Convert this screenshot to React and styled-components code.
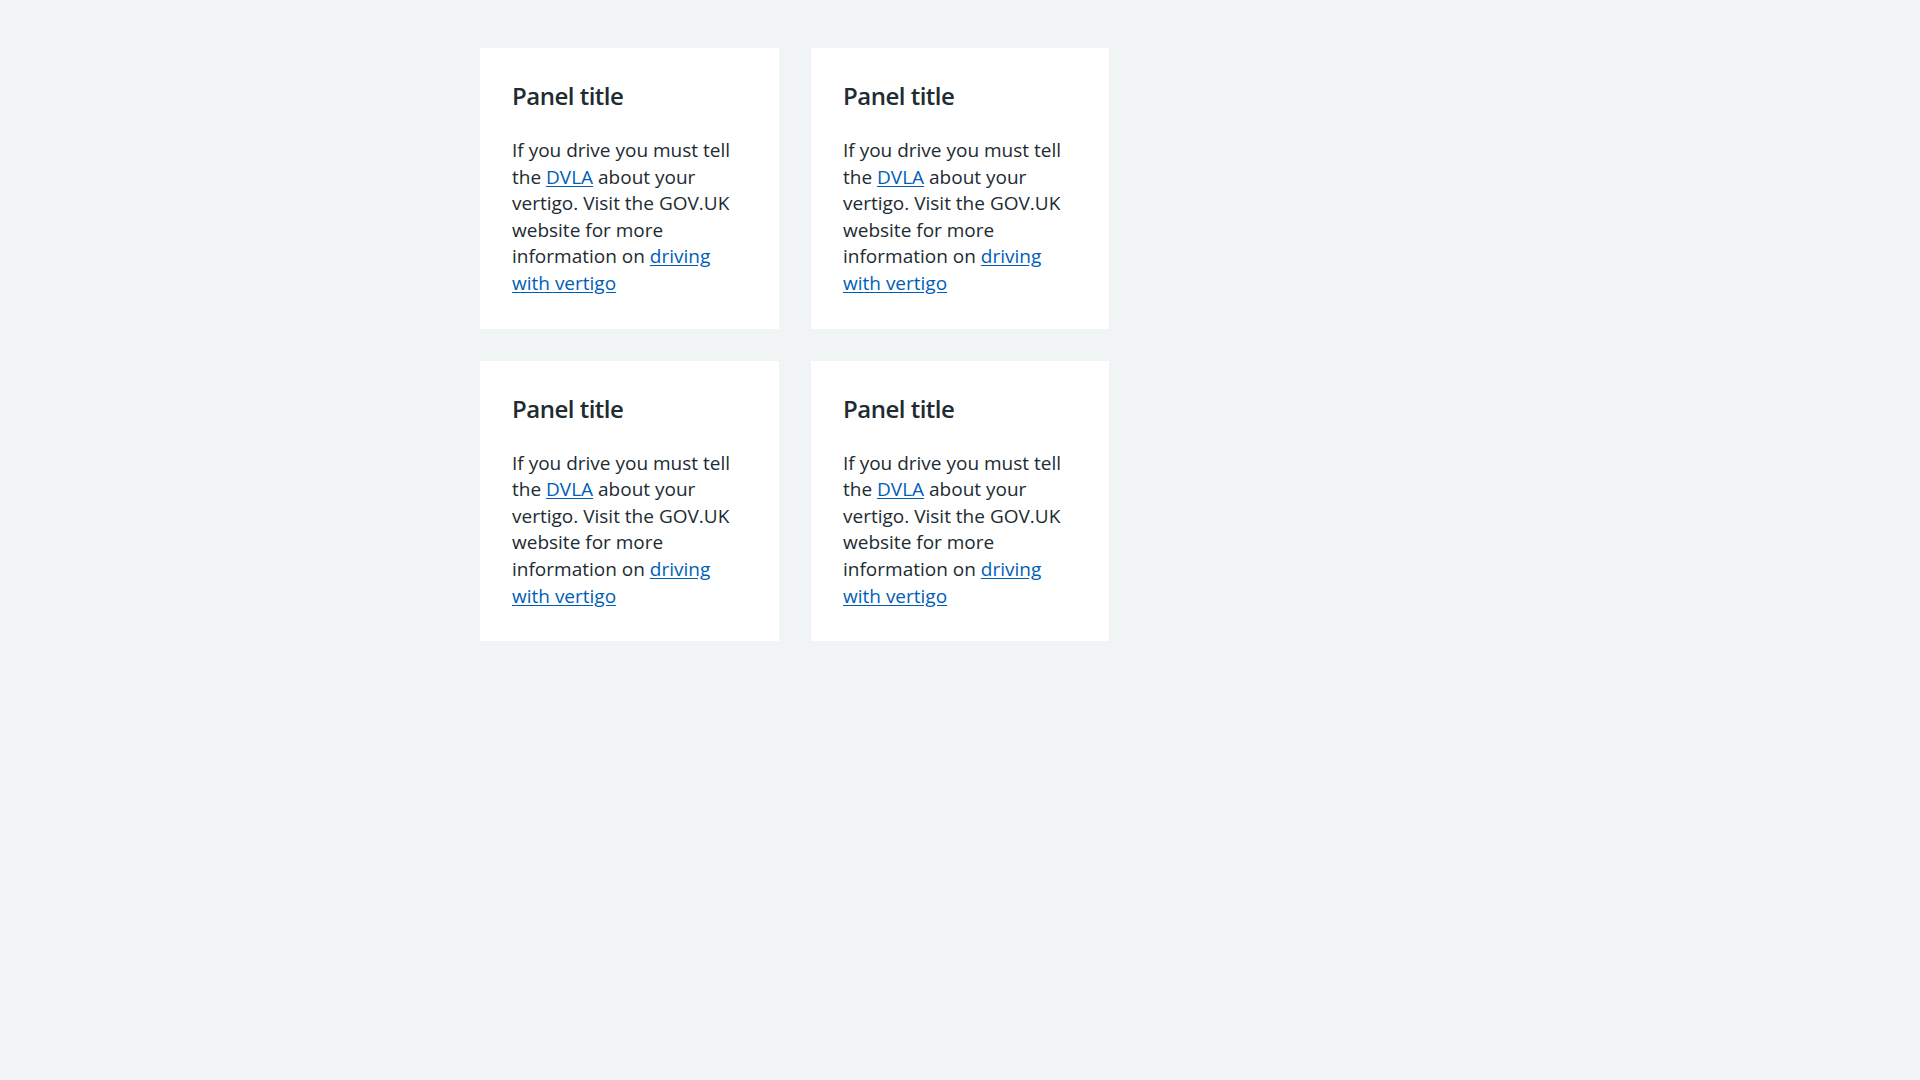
import React from "react";
import styled, { createGlobalStyle } from "styled-components";

const GlobalStyle = createGlobalStyle`
  html, body {
    margin: 0;
    padding: 0;
    background: #f0f4f5;
  }
  body {
    font-family: "Open Sans", "Noto Sans", Arial, sans-serif;
    color: #212b32;
    -webkit-font-smoothing: antialiased;
  }
`;

const Container = styled.div`
  max-width: 960px;
  margin: 0 auto;
  padding-top: 48px;
`;

const Grid = styled.div`
  display: grid;
  grid-template-columns: 299px 298px;
  column-gap: 32px;
  row-gap: 32px;
`;

const Panel = styled.div`
  background: #ffffff;
  padding: 32px;
`;

const Title = styled.h3`
  margin: 0 0 25px;
  font-size: 24px;
  line-height: 32px;
  font-weight: 600;
  letter-spacing: -0.5px;
  color: #212b32;
`;

const Body = styled.p`
  margin: 0;
  font-size: 19px;
  line-height: 26.6px;
`;

const Link = styled.a`
  color: #005eb8;
  text-decoration: underline;
  text-underline-offset: 2px;
`;

const panels = [1, 2, 3, 4];

export default function App() {
  return (
    <>
      <GlobalStyle />
      <Container>
        <Grid>
          {panels.map((n) => (
            <Panel key={n}>
              <Title>Panel title</Title>
              <Body>
                If you drive you must tell the <Link href="#">DVLA</Link> about
                your vertigo. Visit the GOV.UK website for more information on{" "}
                <Link href="#">driving with vertigo</Link>
              </Body>
            </Panel>
          ))}
        </Grid>
      </Container>
    </>
  );
}
